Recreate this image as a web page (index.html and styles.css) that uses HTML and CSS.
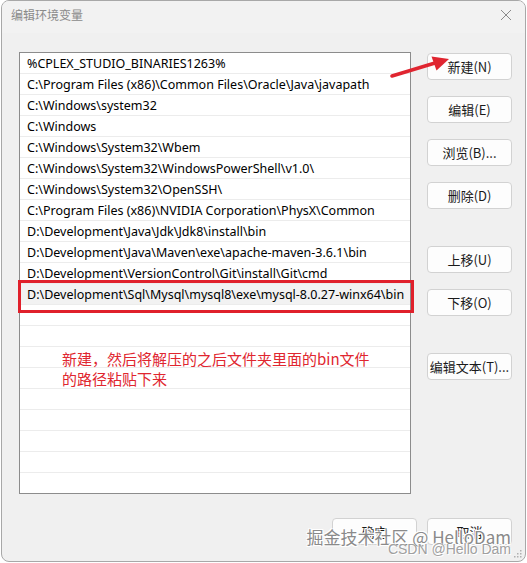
FILE: index.html
```html
<!DOCTYPE html>
<html lang="zh-CN">
  <head>
    <meta charset="UTF-8" />
    <meta name="viewport" content="width=device-width, initial-scale=1.0" />
    <title>编辑环境变量</title>
    <link rel="stylesheet" href="styles.css">
  </head>
  <body>
    <div class="window">
      <div class="titlebar">
        <span class="title">编辑环境变量</span>
        <svg class="close" width="12" height="12" viewBox="0 0 12 12">
          <path d="M1 1L11 11M11 1L1 11" stroke="#8a8a8a" stroke-width="1" fill="none" />
        </svg>
      </div>

      <div class="content">
        <div class="path-list">
          <div class="row">%CPLEX_STUDIO_BINARIES1263%</div>
          <div class="row">C:\Program Files (x86)\Common Files\Oracle\Java\javapath</div>
          <div class="row">C:\Windows\system32</div>
          <div class="row">C:\Windows</div>
          <div class="row">C:\Windows\System32\Wbem</div>
          <div class="row">C:\Windows\System32\WindowsPowerShell\v1.0\</div>
          <div class="row">C:\Windows\System32\OpenSSH\</div>
          <div class="row">C:\Program Files (x86)\NVIDIA Corporation\PhysX\Common</div>
          <div class="row">D:\Development\Java\Jdk\Jdk8\install\bin</div>
          <div class="row">D:\Development\Java\Maven\exe\apache-maven-3.6.1\bin</div>
          <div class="row">D:\Development\VersionControl\Git\install\Git\cmd</div>
          <div class="row selected">D:\Development\Sql\Mysql\mysql8\exe\mysql-8.0.27-winx64\bin</div>
          <div class="row"></div>
          <div class="row"></div>
          <div class="row"></div>
          <div class="row"></div>
          <div class="row"></div>
          <div class="row"></div>
          <div class="row"></div>
          <div class="row"></div>
          <div class="row"></div>

          <div class="note">新建，然后将解压的之后文件夹里面的bin文件<br>的路径粘贴下来</div>
        </div>

        <div class="side-buttons">
          <button class="btn">新建(N)</button>
          <button class="btn">编辑(E)</button>
          <button class="btn">浏览(B)...</button>
          <button class="btn">删除(D)</button>
          <button class="btn gap-big">上移(U)</button>
          <button class="btn">下移(O)</button>
          <button class="btn gap-big">编辑文本(T)...</button>
        </div>
      </div>

      <div class="footer">
        <button class="btn">确定</button>
        <button class="btn">取消</button>
      </div>

      <div class="red-box"></div>
      <svg class="arrow" width="80" height="40" viewBox="0 0 80 40">
        <path d="M11 35L54 22" stroke="#e02530" stroke-width="3.5" stroke-linecap="round" />
        <path d="M68 18L55.5 29.5L50.5 15.5Z" fill="#e02530" />
      </svg>

      <div class="watermark">
        <div class="wm-big">掘金技术社区 @ HelloDam</div>
        <div class="wm-small">CSDN @Hello Dam</div>
      </div>
      <svg class="grip" width="10" height="10" viewBox="0 0 10 10">
        <rect x="7" y="1" width="1.5" height="1.5" fill="#b0b0b0" />
        <rect x="4" y="4" width="1.5" height="1.5" fill="#b0b0b0" />
        <rect x="7" y="4" width="1.5" height="1.5" fill="#b0b0b0" />
        <rect x="1" y="7" width="1.5" height="1.5" fill="#b0b0b0" />
        <rect x="4" y="7" width="1.5" height="1.5" fill="#b0b0b0" />
        <rect x="7" y="7" width="1.5" height="1.5" fill="#b0b0b0" />
      </svg>
    </div>
  </body>
</html>
```

FILE: styles.css
```css
* {
  margin: 0;
  padding: 0;
  box-sizing: border-box;
}

body {
  background-color: #ffffff;
  font-family: "Noto Sans", "Noto Sans CJK SC", sans-serif;
  font-size: 12.5px;
  color: #000000;
}

.window {
  position: relative;
  margin-left: 1px;
  width: 525px;
  height: 562px;
  background-color: #f0f0f0;
  border: 1px solid #a8a8a8;
  border-radius: 8px;
  overflow: hidden;
}

.titlebar {
  height: 32px;
  display: flex;
  align-items: flex-start;
  justify-content: space-between;
  padding: 5px 13px 0 9px;
  background-color: #f2f2f2;
}

.title {
  font-family: "Noto Sans CJK SC", sans-serif;
  font-size: 12px;
  line-height: 18px;
  color: #8a8a8a;
}

.close {
  margin-top: 3px;
}

.content {
  display: flex;
  gap: 16px;
  padding: 19px 0 0 17px;
}

.path-list {
  position: relative;
  width: 392px;
  height: 442px;
  background-color: #ffffff;
  border: 1px solid #8c8c8c;
  overflow: hidden;
}

.row {
  height: 21px;
  line-height: 21px;
  padding-left: 7px;
  border-bottom: 1px solid #ececec;
  white-space: nowrap;
  overflow: hidden;
}

.row.selected {
  background-color: #f2f2f2;
}

.note {
  position: absolute;
  left: 42px;
  top: 296px;
  font-family: "Noto Sans CJK SC", sans-serif;
  font-size: 15px;
  line-height: 20px;
  color: #e0262f;
}

.side-buttons {
  display: flex;
  flex-direction: column;
  gap: 16px;
  padding-top: 1px;
}

.btn {
  width: 85px;
  height: 27px;
  background-color: #fdfdfd;
  border: 1px solid #d2d2d2;
  border-radius: 4px;
  font-family: "Noto Sans CJK SC", sans-serif;
  font-size: 13px;
  color: #1a1a1a;
}

.side-buttons .gap-big {
  margin-top: 21px;
}

.footer {
  display: flex;
  justify-content: flex-end;
  gap: 10px;
  padding: 24px 13px 0 0;
}

.red-box {
  position: absolute;
  left: 16px;
  top: 279px;
  width: 396px;
  height: 33px;
  border: 3px solid #e0202b;
}

.arrow {
  position: absolute;
  left: 379px;
  top: 40px;
}

.watermark {
  position: absolute;
  right: 14px;
  top: 526px;
  text-align: right;
}

.wm-big {
  font-family: "Noto Sans CJK SC", sans-serif;
  font-size: 17px;
  line-height: 20px;
  color: #8a8a8a;
  text-shadow: 1px 1px 0 #fff, -1px -1px 0 #fff, 1px -1px 0 #fff, -1px 1px 0 #fff;
}

.wm-small {
  font-family: "Liberation Sans", sans-serif;
  font-size: 14px;
  line-height: 12px;
  margin-top: -4px;
  color: #a0a0a0;
  text-shadow: 1px 1px 0 #fff, -1px -1px 0 #fff;
}

.grip {
  position: absolute;
  right: 2px;
  bottom: 2px;
}
```
